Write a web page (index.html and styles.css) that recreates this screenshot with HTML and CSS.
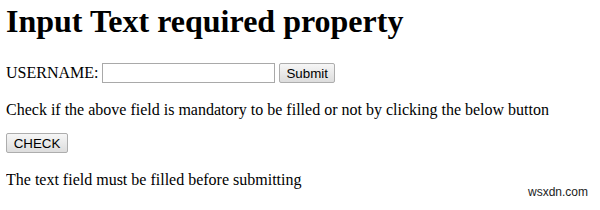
FILE: index.html
```html
<!DOCTYPE html>
<html>
<head>
<meta charset="utf-8">
<link rel="stylesheet" href="styles.css">
</head>
<body>
<h1 class="title">Input Text required property</h1>
<form class="form">
  <label class="label" for="user">USERNAME:</label>
  <input class="field" id="user" type="text">
  <button class="btn" type="button">Submit</button>
</form>
<p class="text lead">Check if the above field is mandatory to be filled or not by clicking the below button</p>
<button class="btn check" type="button">CHECK</button>
<p class="text note">The text field must be filled before submitting</p>
<div class="mark">wsxdn.com</div>
</body>
</html>
```
FILE: styles.css
```css
html, body {
  background: #fff;
}
body {
  margin: 0 6px;
  font-family: "Liberation Serif", "Times New Roman", serif;
  font-size: 16px;
  color: #000;
}
.title {
  font-size: 32px;
  font-weight: bold;
  margin: 3px 0 21px;
  line-height: 37px;
}
.form {
  margin: 0;
  display: flex;
  align-items: center;
  height: 24px;
}
.label {
  margin-right: 4px;
}
.field {
  width: 173px;
  height: 20px;
  box-sizing: border-box;
  border: 1px solid #a9a9a9;
  padding: 1px 2px;
  margin: 0 4px 0 0;
  font-family: "Liberation Sans", Arial, sans-serif;
  font-size: 13.33px;
}
.btn {
  height: 20px;
  box-sizing: border-box;
  border: 1px solid #adadad;
  border-radius: 2px;
  background: linear-gradient(#f6f6f6, #dddddd);
  font-family: "Liberation Sans", Arial, sans-serif;
  font-size: 13.33px;
  color: #000;
  padding: 0 6px;
  margin: 0;
}
.check {
  display: block;
  width: 62px;
  padding: 0;
}
.text {
  margin: 16px 0;
  line-height: 18px;
}
.lead {
  margin-bottom: 14px;
}
.note {
  margin-top: 18px;
}
.mark {
  position: absolute;
  left: 528px;
  top: 185px;
  font-family: "Liberation Sans", Arial, sans-serif;
  font-size: 12px;
  color: #222;
}
```
